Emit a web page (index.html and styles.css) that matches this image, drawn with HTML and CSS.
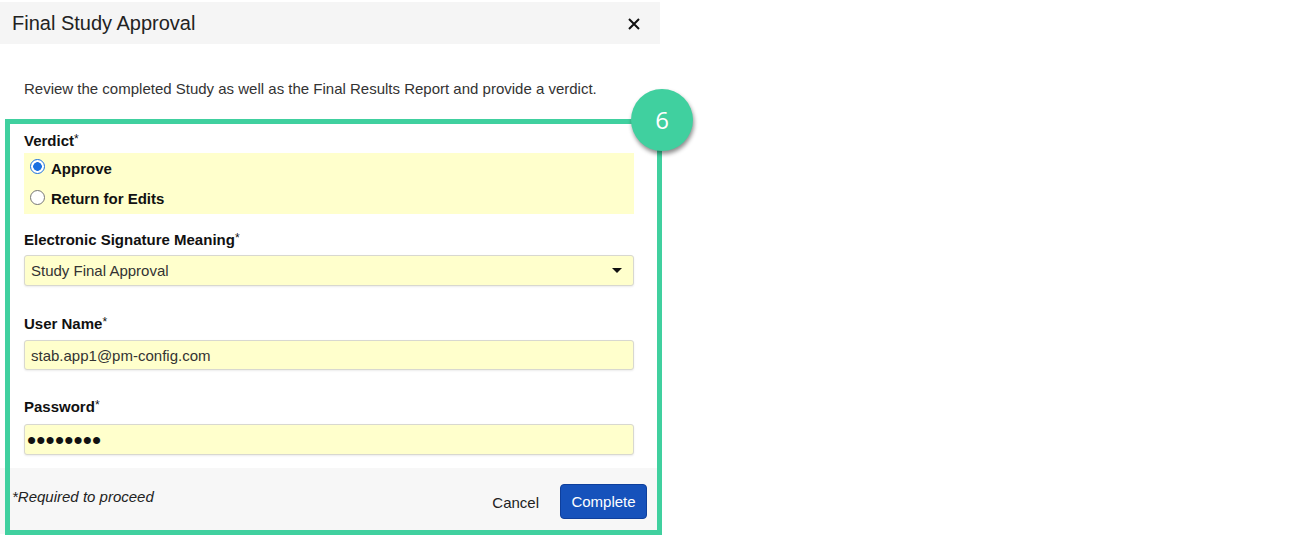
FILE: index.html
```html
<!DOCTYPE html>
<html lang="en">
<head>
<meta charset="utf-8">
<title>Final Study Approval</title>
<link rel="stylesheet" href="styles.css">
</head>
<body>
<div class="stage">
  <div class="dialog">
    <div class="dialog-header">
      <h1 class="dialog-title">Final Study Approval</h1>
      <button class="close-btn" aria-label="Close">
        <svg width="12" height="12" viewBox="0 0 12 12"><path d="M1 1 L11 11 M11 1 L1 11" stroke="#111" stroke-width="2" fill="none"/></svg>
      </button>
    </div>
    <div class="dialog-body">
      <p class="intro">Review the completed Study as well as the Final Results Report and provide a verdict.</p>

      <div class="field-label verdict-label">Verdict<span class="req">*</span></div>
      <div class="radio-group">
        <label class="radio-row"><span class="radio checked"></span>Approve</label>
        <label class="radio-row"><span class="radio"></span>Return for Edits</label>
      </div>

      <div class="field-label sig-label">Electronic Signature Meaning<span class="req">*</span></div>
      <div class="control select">
        <span>Study Final Approval</span>
        <span class="caret"></span>
      </div>

      <div class="field-label user-label">User Name<span class="req">*</span></div>
      <div class="control input">stab.app1@pm-config.com</div>

      <div class="field-label pw-label">Password<span class="req">*</span></div>
      <div class="control input pw"><span class="dots">••••••••</span></div>
    </div>
    <div class="dialog-footer">
      <span class="required-note">*Required to proceed</span>
      <div class="actions">
        <button class="btn-cancel">Cancel</button>
        <button class="btn-complete">Complete</button>
      </div>
    </div>
  </div>
  <div class="highlight"></div>
  <div class="badge">6</div>
</div>
</body>
</html>
```

FILE: styles.css
```css
html, body {
  margin: 0;
  padding: 0;
  background: #ffffff;
}

body {
  font-family: "Liberation Sans", Arial, sans-serif;
  color: #222;
  width: 1300px;
  height: 542px;
  overflow: hidden;
}

.stage {
  position: relative;
  width: 1300px;
  height: 542px;
}

.dialog {
  width: 660px;
  padding-top: 2px;
}

.dialog-header {
  height: 42px;
  background: #f5f5f5;
  display: flex;
  align-items: center;
  justify-content: space-between;
  padding: 0 20px 0 12px;
  box-sizing: border-box;
}

.dialog-title {
  margin: 0;
  font-size: 20px;
  font-weight: normal;
  color: #222;
  line-height: 22px;
}

.close-btn {
  border: 0;
  background: transparent;
  padding: 0;
  width: 12px;
  height: 12px;
  display: flex;
  margin-top: 1px;
}

.dialog-body {
  padding: 35px 26px 0 24px;
}

.intro {
  margin: 0;
  font-size: 15px;
  line-height: 20px;
  color: #333;
}

.field-label {
  font-size: 15px;
  font-weight: bold;
  line-height: 20px;
  color: #111;
}

.req {
  font-weight: normal;
  font-size: 12px;
  vertical-align: 3px;
}

.verdict-label {
  margin-top: 30px;
}

.radio-group {
  margin-top: 2px;
  background: #ffffcc;
  height: 61px;
  display: flex;
  flex-direction: column;
}

.radio-row {
  height: 30px;
  display: flex;
  align-items: center;
  font-size: 15px;
  font-weight: bold;
  color: #111;
  padding-left: 6px;
}

.radio-row + .radio-row {
  height: 31px;
}

.radio {
  width: 13px;
  height: 13px;
  border: 1px solid #767676;
  border-radius: 50%;
  background: #fff;
  margin-right: 6px;
  margin-top: -3px;
  box-sizing: content-box;
}

.radio.checked {
  border-color: #1a6fe0;
  background: radial-gradient(circle, #1a6fe0 0 4px, #ffffff 4.6px 100%);
}

.sig-label {
  margin-top: 14px;
}

.user-label {
  margin-top: 26px;
}

.pw-label {
  margin-top: 25px;
}

.control {
  margin-top: 5px;
  background: #ffffcc;
  border: 1px solid #d8d8d0;
  border-radius: 3px;
  box-shadow: 0 1px 2px rgba(0, 0, 0, 0.08);
  box-sizing: border-box;
  font-size: 15px;
  color: #333;
  display: flex;
  align-items: center;
  padding: 0 7px 0 6px;
}

.select {
  height: 31px;
  justify-content: space-between;
  padding-right: 11px;
}

.caret {
  width: 0;
  height: 0;
  border-left: 5px solid transparent;
  border-right: 5px solid transparent;
  border-top: 5px solid #111;
}

.input {
  height: 30px;
  margin-top: 6px;
}

.pw {
  height: 31px;
  margin-top: 7px;
  padding-left: 2px;
}

.dots {
  font-size: 26px;
  line-height: 20px;
  color: #111;
  letter-spacing: 0.2px;
  margin-top: 1px;
}

.dialog-footer {
  margin-top: 13px;
  background: #f7f7f7;
  height: 66px;
  display: flex;
  justify-content: space-between;
  align-items: flex-start;
  padding: 16px 13px 0 12px;
  box-sizing: border-box;
}

.required-note {
  font-style: italic;
  font-size: 15px;
  line-height: 20px;
  color: #222;
  margin-top: 3px;
}

.actions {
  display: flex;
  align-items: center;
  gap: 21px;
}

.btn-cancel {
  border: 0;
  background: transparent;
  font-family: "Liberation Sans", Arial, sans-serif;
  font-size: 15px;
  color: #222;
  padding: 0;
  margin-top: 1px;
}

.btn-complete {
  width: 87px;
  height: 35px;
  border: 1px solid #0e3f9c;
  border-radius: 4px;
  background: #1652bb;
  color: #ffffff;
  font-family: "Liberation Sans", Arial, sans-serif;
  font-size: 15px;
  padding: 0;
}

.highlight {
  position: absolute;
  left: 5px;
  top: 119px;
  width: 657px;
  height: 416px;
  border: 5px solid #40d09f;
  box-sizing: border-box;
  pointer-events: none;
}

.badge {
  position: absolute;
  left: 631px;
  top: 89px;
  width: 62px;
  height: 62px;
  border-radius: 50%;
  background: #40d09f;
  color: #ffffff;
  font-family: "Open Sans", "Noto Sans", sans-serif;
  font-size: 24px;
  line-height: 62px;
  text-align: center;
  box-shadow: 1px 3px 4px rgba(0, 0, 0, 0.45);
}
```
